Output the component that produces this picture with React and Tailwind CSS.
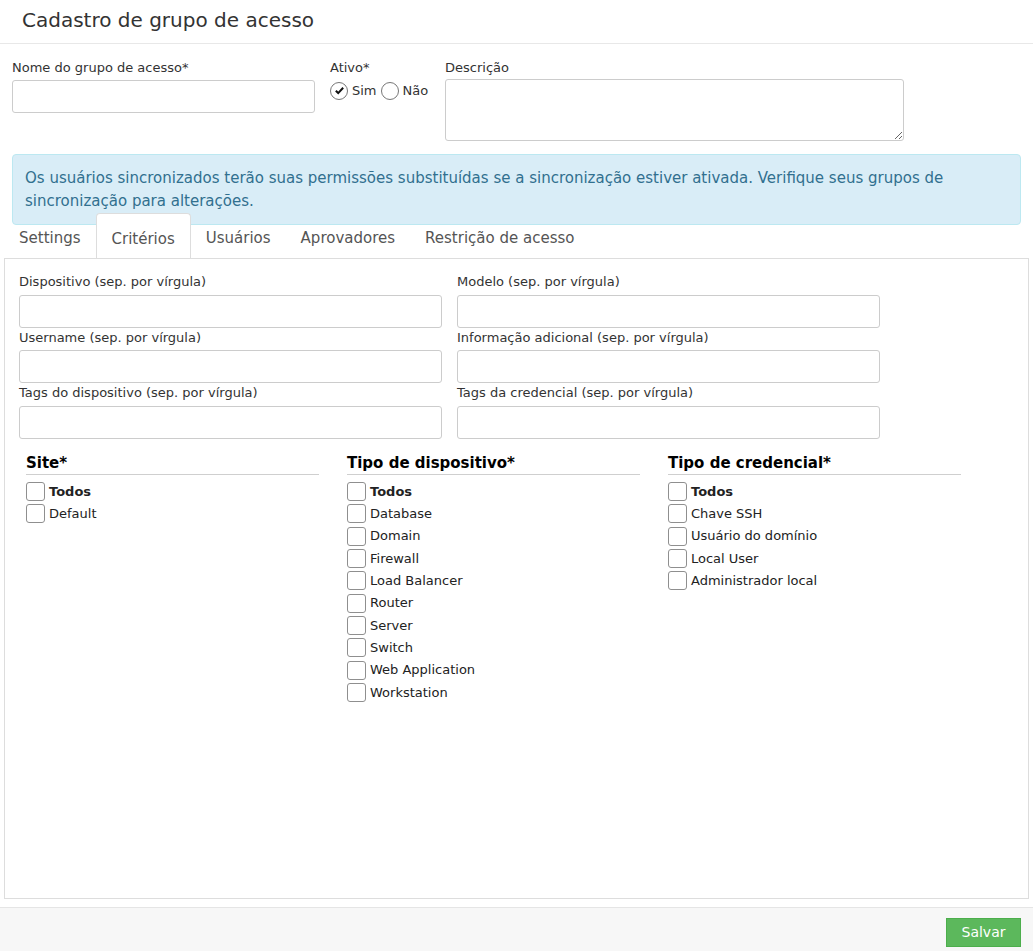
const font = { fontFamily: '"DejaVu Sans", "Open Sans", sans-serif' }

function Box() {
  return <span className="w-[19px] h-[19px] shrink-0 rounded-[3px] border border-[#8f8f8f] bg-white" />
}

function Group({ title, items }) {
  return (
    <div className="w-[293px]">
      <div className="text-[15px] font-bold text-black leading-[20px] pb-[1px] border-b border-[#cfcfcf]">{title}</div>
      <div className="pt-[6px] flex flex-col">
        {items.map((it, i) => (
          <label key={it} className="flex items-center gap-[4px] h-[22.3px] text-[13px] text-[#222]">
            <Box />
            <span className={i === 0 ? 'font-semibold' : ''}>{it}</span>
          </label>
        ))}
      </div>
    </div>
  )
}

function Field({ label }) {
  return (
    <div className="w-[423px]">
      <div className="text-[13px] text-[#333] leading-[20px] h-[22.5px]">{label}</div>
      <input className="block w-full h-[33px] rounded-[3px] border border-[#ccc] bg-white" />
    </div>
  )
}

export default function App() {
  const tabs = ['Settings', 'Critérios', 'Usuários', 'Aprovadores', 'Restrição de acesso']
  return (
    <div className="w-[1033px] h-[951px] bg-white flex flex-col text-[#333]" style={font}>
      <div className="h-[44px] border-b border-[#e8e8e8] flex items-center pl-[22px] pb-[4px] text-[20px] text-[#333]">
        Cadastro de grupo de acesso
      </div>

      <div className="flex px-[12px] pt-[14px]">
        <div className="w-[303px]">
          <div className="text-[13px] leading-[20px] h-[22px]">Nome do grupo de acesso*</div>
          <input className="block w-full h-[33px] rounded-[3px] border border-[#ccc]" />
        </div>
        <div className="ml-[15px] w-[115px]">
          <div className="text-[13px] leading-[20px] h-[22px]">Ativo*</div>
          <div className="flex items-center text-[13px] mt-[1px]">
            <span className="w-[18px] h-[18px] rounded-full border border-[#777] flex items-center justify-center">
              <svg width="11" height="11" viewBox="0 0 12 12"><path d="M2 6.2l2.6 2.6L10 3" fill="none" stroke="#111" strokeWidth="2.2" /></svg>
            </span>
            <span className="ml-[4px]">Sim</span>
            <span className="ml-[4px] w-[18px] h-[18px] rounded-full border border-[#777]" />
            <span className="ml-[4px]">Não</span>
          </div>
        </div>
        <div className="w-[459px]">
          <div className="text-[13px] leading-[20px] h-[21px]">Descrição</div>
          <textarea className="block w-full h-[62px] rounded-[3px] border border-[#ccc]" />
        </div>
      </div>

      <div className="mx-[12px] mt-[13px] h-[71px] rounded-[4px] border border-[#bce8f1] bg-[#d9edf7] text-[#31708f] text-[15px] leading-[23px] px-[12px] pt-[12px]">
        Os usuários sincronizados terão suas permissões substituídas se a sincronização estiver ativada. Verifique seus grupos de sincronização para alterações.
      </div>

      <div className="flex px-[4px] -mt-[12px] relative">
        {tabs.map((t, i) => (
          <div
            key={t}
            className={
              i === 1
                ? 'h-[45px] px-[15px] pt-[14px] text-[15px] text-[#555] bg-white border border-[#ddd] border-b-0 rounded-t-[4px] -mb-px relative z-10'
                : 'h-[45px] px-[15px] pt-[14px] text-[15px] text-[#555]'
            }
          >
            {t}
          </div>
        ))}
      </div>

      <div className="mx-[4px] h-[641px] border border-[#ddd] px-[14px] pt-[13px]">
        <div className="grid grid-cols-[423px_423px] gap-x-[15px] gap-y-[0px]">
          <Field label="Dispositivo (sep. por vírgula)" />
          <Field label="Modelo (sep. por vírgula)" />
          <Field label="Username (sep. por vírgula)" />
          <Field label="Informação adicional (sep. por vírgula)" />
          <Field label="Tags do dispositivo (sep. por vírgula)" />
          <Field label="Tags da credencial (sep. por vírgula)" />
        </div>
        <div className="flex gap-[28px] pl-[7px] mt-[14px]">
          <Group title="Site*" items={['Todos', 'Default']} />
          <Group
            title="Tipo de dispositivo*"
            items={['Todos', 'Database', 'Domain', 'Firewall', 'Load Balancer', 'Router', 'Server', 'Switch', 'Web Application', 'Workstation']}
          />
          <Group title="Tipo de credencial*" items={['Todos', 'Chave SSH', 'Usuário do domínio', 'Local User', 'Administrador local']} />
        </div>
      </div>

      <div className="mt-[8px] flex-1 bg-[#f7f7f7] border-t border-[#e5e5e5] flex justify-end items-start pt-[10px] pr-[12px]">
        <button className="h-[29px] w-[75px] bg-[#5cb85c] border border-[#4cae4c] text-white text-[14px]">Salvar</button>
      </div>
    </div>
  )
}
